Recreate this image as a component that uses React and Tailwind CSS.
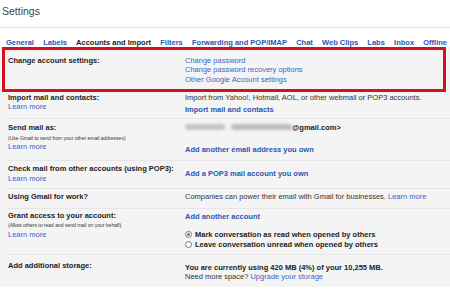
const tabs = [
  'General',
  'Labels',
  'Accounts and Import',
  'Filters',
  'Forwarding and POP/IMAP',
  'Chat',
  'Web Clips',
  'Labs',
  'Inbox',
  'Offline',
];

function Radio({ checked }) {
  return (
    <span className="inline-flex items-center justify-center w-[7px] h-[7px] rounded-full border border-[#6b7c93] bg-white mr-[3px] align-[-1px]">
      {checked && <span className="w-[3px] h-[3px] rounded-full bg-[#3c9a3c]" />}
    </span>
  );
}

function Row({ className = '', left, right }) {
  return (
    <div className={`flex border-b border-[#e6e6e6] ${className}`}>
      <div className="w-[177px] shrink-0 flex flex-col">{left}</div>
      <div className="flex-1 flex flex-col">{right}</div>
    </div>
  );
}

const label = 'font-bold text-[#222]';
const small = 'text-[5px] leading-[8px] text-[#333]';
const link = 'text-[#3a66c4]';
const boldLink = 'font-bold text-[#2a55b3]';

export default function App() {
  return (
    <div className="w-[450px] h-[290px] bg-white overflow-hidden text-[7.5px] leading-[9px] text-[#333] font-['Liberation_Sans',Arial,sans-serif]">
      <div className="pt-[5px] pb-[9px] px-[2px] border-b border-[#e3e3e3]">
        <h1 className="text-[10.5px] leading-[13px] text-[#444]">Settings</h1>
      </div>

      <div className="mt-[10px] flex justify-between pl-[6px] pr-[3px] font-bold">
        {tabs.map((t) => (
          <span key={t} className={t === 'Accounts and Import' ? 'text-[#222]' : 'text-[#2a55b3]'}>
            {t}
          </span>
        ))}
      </div>

      <div className="bg-[#f4f4f4] pb-[5px]">
        <div className="mx-[2px] w-[444px] border-[3px] border-[#d6101e] flex pt-[6px] pb-[5px] pl-[3px]">
          <div className={`w-[177px] shrink-0 ${label}`}>Change account settings:</div>
          <div className="flex flex-col leading-[9.3px]">
            <span className={link}>Change password</span>
            <span className={link}>Change password recovery options</span>
            <span className={link}>Other Google Account settings</span>
          </div>
        </div>

        <div className="pl-[8px]">
          <Row
            className="pt-[1px] pb-[4px]"
            left={
              <>
                <span className={label}>Import mail and contacts:</span>
                <span className={link}>Learn more</span>
              </>
            }
            right={
              <>
                <span>Import from Yahoo!, Hotmail, AOL, or other webmail or POP3 accounts.</span>
                <span className={`mt-[3px] ${boldLink}`}>Import mail and contacts</span>
              </>
            }
          />

          <Row
            className="pt-[4px] pb-[6px]"
            left={
              <>
                <span className={label}>Send mail as:</span>
                <span className={`mt-[2px] ${small}`}>(Use Gmail to send from your other email addresses)</span>
                <span className={link}>Learn more</span>
              </>
            }
            right={
              <>
                <span className="flex items-center font-bold text-[#222]">
                  <span className="flex items-center w-[107px] gap-[6px]">
                    <span className="w-[40px] h-[6px] rounded-full bg-[#c4c4c4] blur-[1.5px]" />
                    <span className="flex-1 h-[6px] rounded-full bg-[#bcbcbc] blur-[1.5px]" />
                  </span>
                  <span>@gmail.com&gt;</span>
                </span>
                <span className={`mt-[13px] ${boldLink}`}>Add another email address you own</span>
              </>
            }
          />

          <Row
            className="pt-[3px] pb-[5px]"
            left={
              <>
                <span className={label}>Check mail from other accounts (using POP3):</span>
                <span className={`mt-[1px] ${link}`}>Learn more</span>
              </>
            }
            right={<span className={`mt-[5px] ${boldLink}`}>Add a POP3 mail account you own</span>}
          />

          <Row
            className="pt-[3px] pb-[7px]"
            left={<span className={label}>Using Gmail for work?</span>}
            right={
              <span>
                Companies can power their email with Gmail for businesses.{' '}
                <span className={link}>Learn more</span>
              </span>
            }
          />

          <Row
            className="pt-[2px] pb-[5px]"
            left={
              <>
                <span className={label}>Grant access to your account:</span>
                <span className={`mt-[1.5px] ${small}`}>(Allow others to read and send mail on your behalf)</span>
                <span className={`mt-[1px] ${link}`}>Learn more</span>
              </>
            }
            right={
              <>
                <span className={`mt-[1.5px] ${boldLink}`}>Add another account</span>
                <span className="mt-[9px] font-bold text-[#222] flex items-center">
                  <Radio checked />
                  Mark conversation as read when opened by others
                </span>
                <span className="mt-[1px] font-bold text-[#222] flex items-center">
                  <Radio />
                  Leave conversation unread when opened by others
                </span>
              </>
            }
          />

          <div className="flex pt-[5.5px] pb-[1px]">
            <div className={`w-[177px] shrink-0 ${label}`}>Add additional storage:</div>
            <div className="flex flex-col mt-[2px]">
              <span className="font-bold text-[#222]">You are currently using 420 MB (4%) of your 10,255 MB.</span>
              <span className="mt-[0.5px]">
                Need more space? <span className={link}>Upgrade your storage</span>
              </span>
            </div>
          </div>
        </div>
      </div>
    </div>
  );
}
